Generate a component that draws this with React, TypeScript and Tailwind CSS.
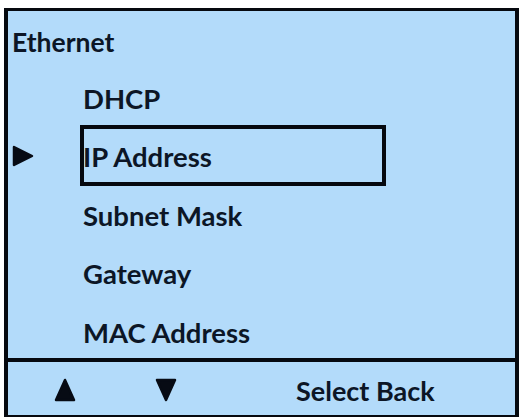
import React from 'react';

const items = ['DHCP', 'IP Address', 'Subnet Mask', 'Gateway', 'MAC Address'];
const selected = 1;

function Tri({ dir }: { dir: 'up' | 'down' | 'right' }) {
  const pts =
    dir === 'up' ? '11,2 20,22 2,22' : dir === 'down' ? '2,2 20,2 11,22' : '2,2 20,11 2,20';
  return (
    <svg width="22" height="24" viewBox="0 0 22 24" className="block">
      <polygon points={pts} fill="#070b14" stroke="#070b14" strokeWidth="2.5" strokeLinejoin="round" />
    </svg>
  );
}

export default function App() {
  return (
    <div
      className="w-[520px] h-[417px] bg-white pt-[8px] pl-[4px] pr-[1px] text-[#0c1626]"
      style={{ fontFamily: 'Lato, "Open Sans", sans-serif' }}
    >
      <div className="h-[409px] flex flex-col border-l-4 border-r-4 border-t-[3px] border-b-2 border-[#06090f] bg-[#b3dbfa]">
        {/* menu area */}
        <div className="h-[347px] shrink-0">
          <div className="h-[58px] pt-[4px] pl-[4px] flex items-center text-[26.5px] font-bold leading-none">
            Ethernet
          </div>
          {items.map((label, i) => (
            <div key={label} className="relative h-[58.5px] flex items-center">
              <div className="w-[75px] shrink-0 pl-[4px]">{i === selected && <Tri dir="right" />}</div>
              <span className="text-[27.5px] font-bold leading-none">{label}</span>
              {i === selected && (
                <div className="absolute left-[72px] top-[-3px] w-[306px] h-[61px] border-4 border-[#06090f]" />
              )}
            </div>
          ))}
        </div>
        {/* divider */}
        <div className="h-[4px] bg-[#06090f] shrink-0" />
        {/* soft keys */}
        <div className="flex-1 flex items-center pt-[3px] pl-[46px]">
          <Tri dir="up" />
          <div className="w-[79px]" />
          <Tri dir="down" />
          <span className="ml-[119px] text-[27px] font-bold leading-none">Select Back</span>
        </div>
      </div>
    </div>
  );
}
